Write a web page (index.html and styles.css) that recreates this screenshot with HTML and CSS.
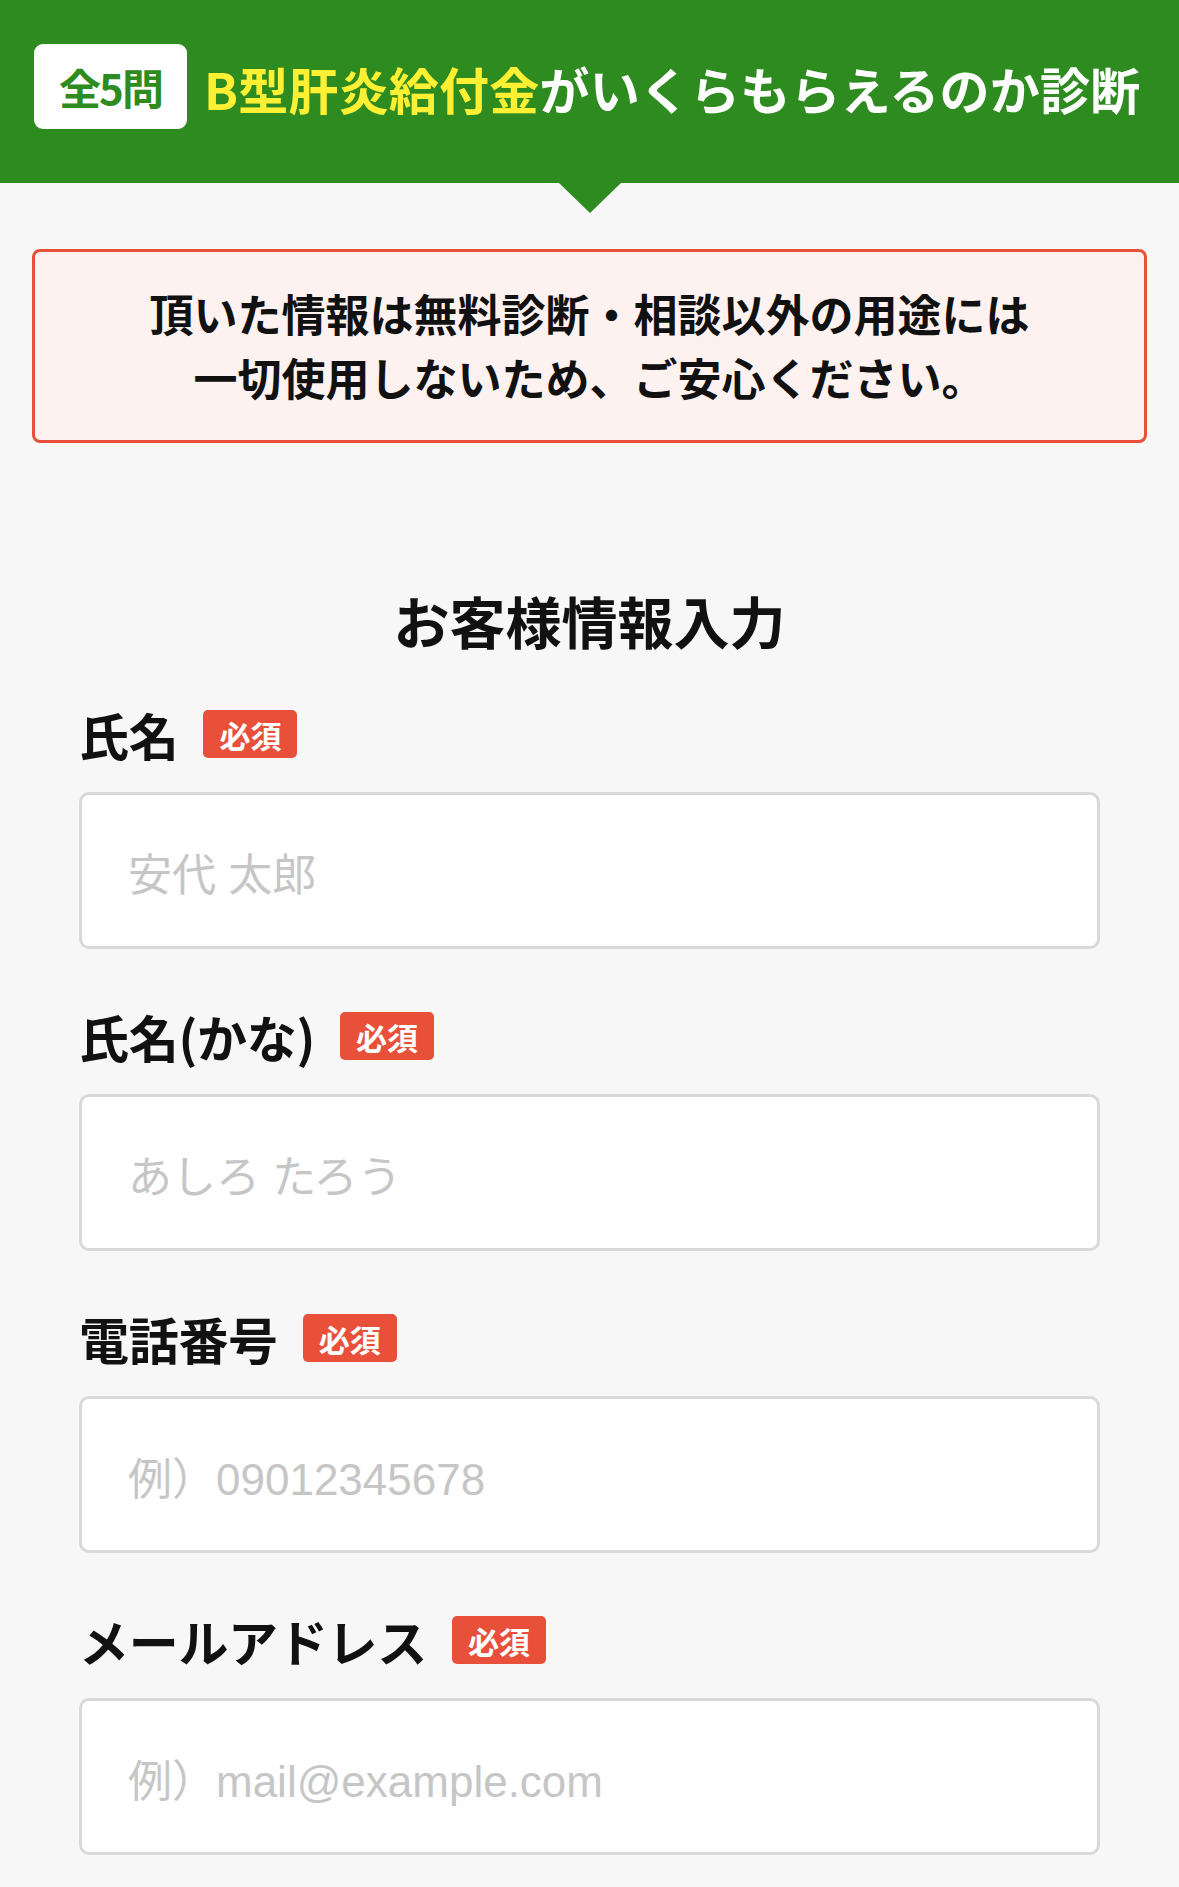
FILE: index.html
```html
<!DOCTYPE html>
<html lang="ja">
<head>
<meta charset="utf-8">
<title>B型肝炎給付金診断</title>
<link rel="stylesheet" href="styles.css">
</head>
<body>
<header class="hero">
  <div class="hero-row">
    <span class="count-badge">全5問</span>
    <h1 class="hero-title"><span class="hl">B型肝炎給付金</span>がいくらもらえるのか診断</h1>
  </div>
</header>
<main class="page">
  <div class="notice">
    <p>頂いた情報は無料診断・相談以外の用途には<br>一切使用しないため、ご安心ください。</p>
  </div>
  <h2 class="form-title">お客様情報入力</h2>
  <form class="form">
    <div class="field">
      <div class="label-row"><label class="label">氏名</label><span class="req">必須</span></div>
      <input class="input" type="text" placeholder="安代 太郎">
    </div>
    <div class="field">
      <div class="label-row"><label class="label">氏名(かな)</label><span class="req">必須</span></div>
      <input class="input" type="text" placeholder="あしろ たろう">
    </div>
    <div class="field">
      <div class="label-row"><label class="label">電話番号</label><span class="req">必須</span></div>
      <input class="input" type="tel" placeholder="例）09012345678">
    </div>
    <div class="field">
      <div class="label-row"><label class="label">メールアドレス</label><span class="req">必須</span></div>
      <input class="input" type="email" placeholder="例）mail@example.com">
    </div>
  </form>
</main>
</body>
</html>
```
FILE: styles.css
```css
* { box-sizing: border-box; }
html, body { margin: 0; padding: 0; }
body {
  background: #f7f7f7;
  font-family: "Noto Sans CJK JP", "Noto Sans", sans-serif;
  color: #111;
}
.hero {
  position: relative;
  background: #2e8b20;
  height: 183px;
  padding: 44px 32px 0 34px;
}
.hero::after {
  content: "";
  position: absolute;
  left: 50%;
  top: 100%;
  transform: translateX(-50%);
  border-left: 31px solid transparent;
  border-right: 31px solid transparent;
  border-top: 30px solid #2e8b20;
}
.hero-row {
  display: flex;
  align-items: center;
  height: 85px;
  gap: 17px;
}
.count-badge {
  display: flex;
  align-items: center;
  justify-content: center;
  width: 153px;
  height: 85px;
  background: #fff;
  border-radius: 9px;
  color: #2e8b20;
  font-weight: 700;
  font-size: 42px;
  letter-spacing: -2px;
}
.hero-title {
  margin: 0;
  color: #fff;
  font-size: 50px;
  font-weight: 700;
  white-space: nowrap;
  line-height: 1;
  padding-top: 2px;
  letter-spacing: 0.2px;
}
.hl { color: #fff033; }
.page { padding: 66px 32px 40px; }
.notice {
  background: #fdf2f0;
  border: 3px solid #e8503a;
  border-radius: 8px;
  padding: 29px 10px 31px;
  text-align: center;
}
.notice p {
  margin: 0;
  font-size: 44px;
  line-height: 64px;
  font-weight: 700;
  color: #111;
}
.form-title {
  margin: 138px 0 0;
  text-align: center;
  font-size: 56px;
  line-height: 78px;
  font-weight: 700;
  color: #111;
}
.form {
  padding: 51px 47px 0;
}
.field { margin-bottom: 63px; }
.label-row {
  display: flex;
  align-items: center;
  gap: 25px;
  height: 48px;
  margin-bottom: 34px;
}
.label {
  font-size: 50px;
  font-weight: 700;
  line-height: 48px;
  color: #111;
  letter-spacing: -0.3px;
}
.req {
  display: flex;
  align-items: center;
  justify-content: center;
  width: 94px;
  height: 48px;
  background: #e8503a;
  border-radius: 5px;
  color: #fff;
  font-size: 31px;
  font-weight: 700;
}
.input {
  display: block;
  width: 100%;
  height: 157px;
  background: #fff;
  border: 3px solid #d9d9d9;
  border-radius: 10px;
  padding: 10px 0 0 46px;
  font-family: "Liberation Sans", "Noto Sans CJK JP", sans-serif;
  font-size: 44px;
  color: #111;
  outline: none;
}
.input::placeholder { color: #c6c6c6; }
```
